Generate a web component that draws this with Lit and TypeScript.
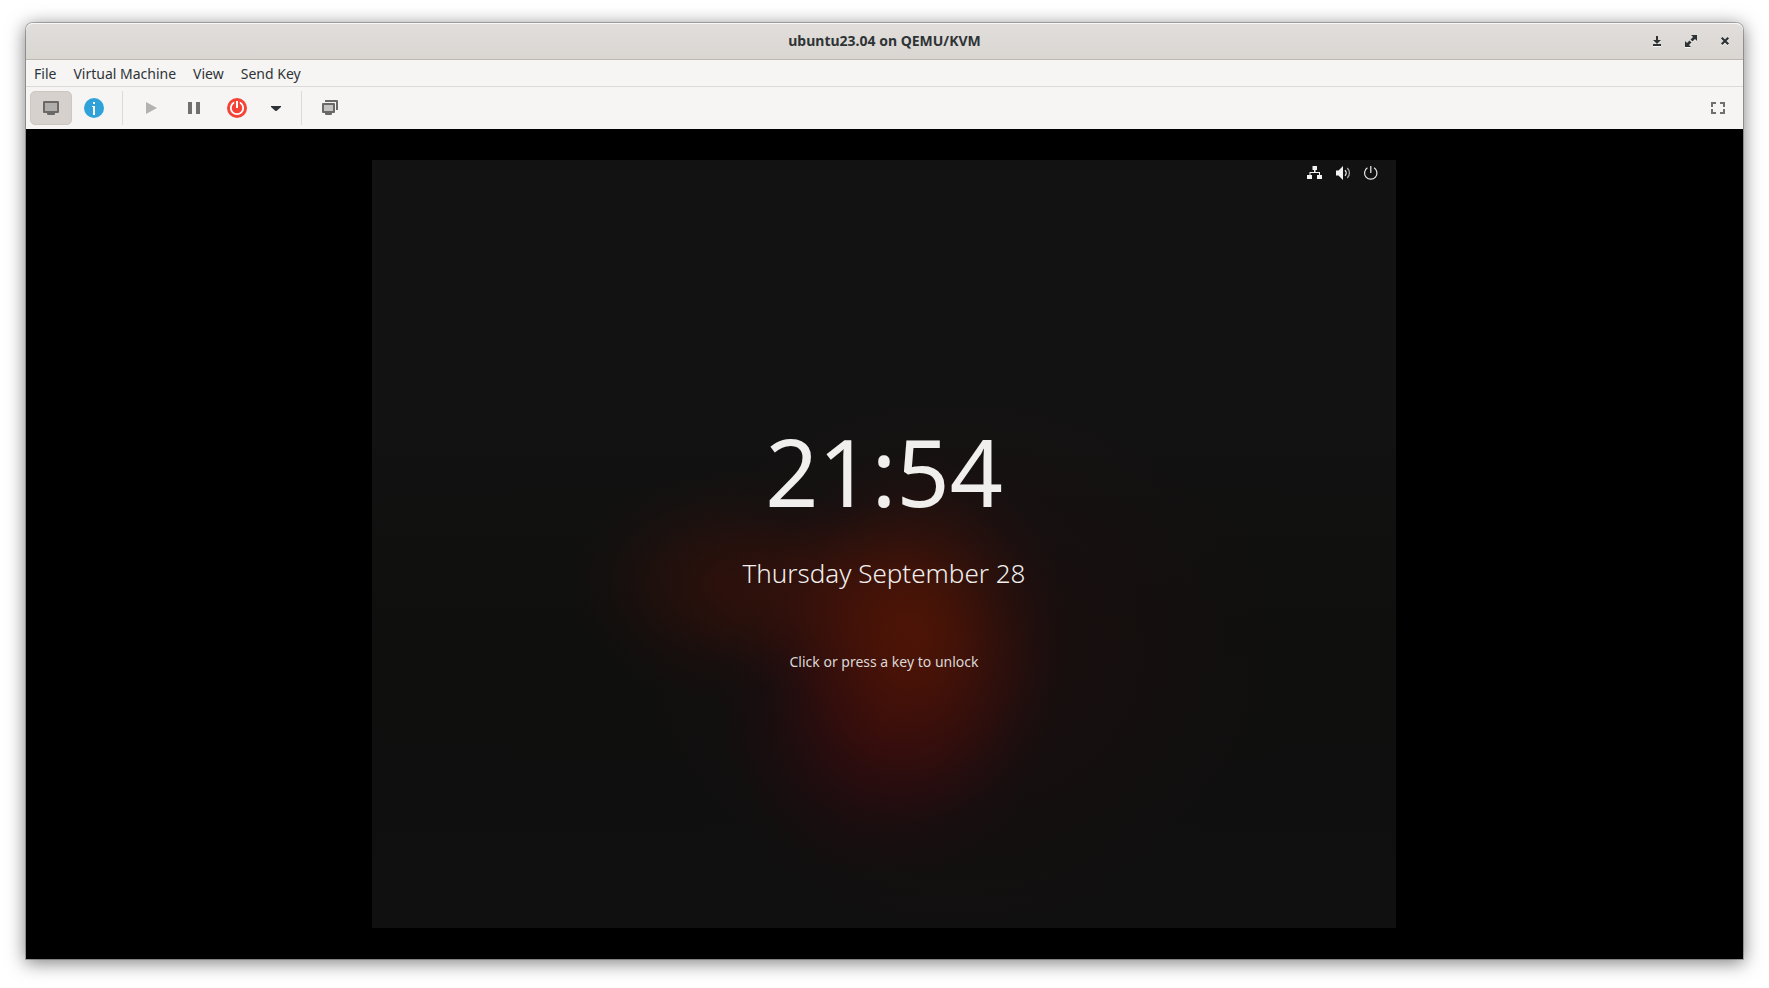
import { LitElement, html, css } from "lit";
import { customElement } from "lit/decorators.js";

const monitorIcon = html`<svg width="16" height="16" viewBox="0 0 16 16" aria-hidden="true">
  <rect x="1" y="2" width="14" height="10" fill="#b0aeab" stroke="#6b6967" stroke-width="2" stroke-linejoin="round" />
  <path d="M4 13h8v1.2l-.8.8H4.800l-.8-.8z" fill="#6b6967" />
</svg>`;

const infoIcon = html`<svg width="20" height="20" viewBox="0 0 20 20" aria-hidden="true">
  <circle cx="10" cy="10" r="10" fill="#30a2da" />
  <path d="M9 4h2v2H9zM8 8h3v9H9V9H8z" fill="#fff" />
</svg>`;

const playIcon = html`<svg width="16" height="16" viewBox="0 0 16 16" aria-hidden="true">
  <path d="M3 2l11 6-11 6z" fill="#b2b2b0" />
</svg>`;

const pauseIcon = html`<svg width="16" height="16" viewBox="0 0 16 16" aria-hidden="true">
  <path d="M2 2h4v12H2zM10 2h4v12h-4z" fill="#71706f" />
</svg>`;

const shutdownIcon = html`<svg width="20" height="20" viewBox="0 0 20 20" aria-hidden="true">
  <circle cx="10" cy="10" r="10" fill="#f44336" />
  <circle cx="10" cy="10" r="6.200" fill="none" stroke="#fff" stroke-width="1.800" />
  <path d="M7.200 2.500h5.600v7.500H7.200z" fill="#f44336" />
  <path d="M9 3h2v7H9z" fill="#fff" />
</svg>`;

const caretIcon = html`<svg width="16" height="16" viewBox="0 0 16 16" aria-hidden="true">
  <path d="M2 6h10v1l-4.500 4h-1L2 7z" fill="#2e3436" />
</svg>`;

const snapshotsIcon = html`<svg width="16" height="16" viewBox="0 0 16 16" aria-hidden="true">
  <path d="M3 1h12v9" fill="none" stroke="#6b6967" stroke-width="2" stroke-linejoin="round" />
  <rect x="1" y="4" width="11" height="8" fill="#c4c3c2" stroke="#6b6967" stroke-width="2" stroke-linejoin="round" />
  <path d="M3 13h7v1.200l-.8.8H3.800l-.8-.8z" fill="#6b6967" />
</svg>`;

const fullscreenIcon = html`<svg width="16" height="16" viewBox="0 0 16 16" aria-hidden="true">
  <path d="M2 7V3h4M10 3h4v4M14 9v4h-4M6 13H2V9" fill="none" stroke="#71706f" stroke-width="2" />
</svg>`;

const minimizeIcon = html`<svg class="etched" width="16" height="16" viewBox="0 0 16 16" aria-hidden="true">
  <path d="M7 3h2v4h3l-4 4-4-4h3zM4 11h8v2H4z" fill="#2e3436" />
</svg>`;

const maximizeIcon = html`<svg class="etched" width="16" height="16" viewBox="0 0 16 16" aria-hidden="true">
  <path d="M8 2h6v6l-2-2-2.500 2.500-2-2L10 4zM2 14V8l2 2 2.500-2.500 2 2L6 12l2 2z" fill="#2e3436" />
</svg>`;

const closeIcon = html`<svg class="etched" width="16" height="16" viewBox="0 0 16 16" aria-hidden="true">
  <path d="M4.700 4.700l6.600 6.600M11.300 4.700l-6.600 6.600" stroke="#2e3436" stroke-width="2.200" />
</svg>`;

const networkIcon = html`<svg width="16" height="16" viewBox="0 0 16 16" aria-hidden="true">
  <path d="M5.500 1h4.500v4H8.500v2H13v3h2v4h-5v-4h2V8H3.500v2H5v4H0v-4h2.500V7h4.500V5H5.500z" fill="#f2f2f2" />
</svg>`;

const volumeIcon = html`<svg width="16" height="16" viewBox="0 0 16 16" aria-hidden="true">
  <path d="M1 5.500h2.500L8 1v14l-4.500-4.500H1z" fill="#f2f2f2" />
  <path d="M10 5.200a4 4 0 0 1 0 5.600" fill="none" stroke="#f2f2f2" stroke-width="1.300" />
  <path d="M12.300 3a7 7 0 0 1 0 10" fill="none" stroke="#a8a8a8" stroke-width="1.300" />
</svg>`;

const powerIcon = html`<svg width="16" height="16" viewBox="0 0 16 16" aria-hidden="true">
  <path d="M4.400 2.800a6.200 6.200 0 1 0 6.700 0" fill="none" stroke="#e8e8e8" stroke-width="1.200" />
  <path d="M7.200 1h1.200v7H7.200z" fill="#f2f2f2" />
</svg>`;

@customElement("lock-screen")
class LockScreen extends LitElement {
  static styles = css`
    :host {
      display: flex;
      flex-direction: column;
      box-sizing: border-box;
      width: 100%;
      max-width: 1024px;
      aspect-ratio: 4 / 3;
      color: #f0efed;
      font-family: "Noto Sans", sans-serif;
      background:
        radial-gradient(ellipse 15% 24% at 53% 62%, rgba(92, 23, 2, 0.68) 0%, rgba(90, 22, 3, 0.58) 25%, rgba(84, 20, 5, 0.32) 55%, rgba(78, 17, 8, 0.1) 80%, transparent 100%),
        radial-gradient(ellipse 15% 15% at 34% 55%, rgba(84, 18, 6, 0.34) 0%, rgba(82, 18, 6, 0.25) 35%, rgba(78, 17, 8, 0.08) 72%, transparent 100%),
        radial-gradient(ellipse 16% 13% at 46% 57%, rgba(84, 20, 6, 0.38) 0%, rgba(82, 20, 6, 0.26) 40%, rgba(78, 17, 8, 0.08) 75%, transparent 100%),
        radial-gradient(ellipse 16% 21% at 50% 73%, rgba(78, 8, 12, 0.44) 0%, rgba(74, 7, 15, 0.3) 40%, rgba(66, 7, 18, 0.1) 75%, transparent 100%),
        radial-gradient(ellipse 32% 36% at 57% 64%, rgba(60, 12, 14, 0.3) 0%, rgba(60, 12, 14, 0.11) 60%, transparent 100%),
        linear-gradient(#121212 0%, #121212 36%, #0f0f0e 60%, #0f0f0f 85%, #111010 100%);
    }
    .status {
      display: flex;
      align-items: center;
      justify-content: flex-end;
      gap: 12px;
      height: 26px;
      padding: 0 17px;
    }
    .icon {
      display: flex;
      padding: 0;
      border: 0;
      background: none;
    }
    .greeting {
      display: flex;
      flex: 1;
      flex-direction: column;
      align-items: center;
      justify-content: center;
      padding-bottom: 20px;
    }
    .clock {
      font-size: 93px;
      line-height: 96px;
    }
    .date {
      margin-top: 36px;
      font-size: 26px;
      line-height: 36px;
      font-weight: 350;
    }
    .hint {
      margin: 61px 0 0;
      font-size: 14px;
      line-height: 20px;
      color: #dcd8d6;
    }
  `;

  render() {
    return html`
      <div class="status">
        <button class="icon" aria-label="Network">${networkIcon}</button>
        <button class="icon" aria-label="Volume">${volumeIcon}</button>
        <button class="icon" aria-label="Power">${powerIcon}</button>
      </div>
      <div class="greeting">
        <time class="clock">21:54</time>
        <time class="date">Thursday September 28</time>
        <p class="hint">Click or press a key to unlock</p>
      </div>
    `;
  }
}

@customElement("app-root")
class AppRoot extends LitElement {
  static styles = css`
    :host {
      display: flex;
      box-sizing: border-box;
      min-height: 100vh;
      padding: 23px 26px 29px;
      background: #fff;
      color: #2e3436;
      font-family: "Noto Sans", sans-serif;
      font-size: 14px;
    }
    button {
      display: flex;
      align-items: center;
      justify-content: center;
      margin: 0;
      padding: 0;
      border: 0;
      background: none;
      color: inherit;
      font: inherit;
    }
    .window {
      display: flex;
      flex: 1;
      flex-direction: column;
      min-width: 0;
      border-radius: 7px 7px 0 0;
      background: #f6f5f4;
      box-shadow:
        0 0 0 1px rgba(0, 0, 0, 0.25),
        0 3px 18px 1px rgba(0, 0, 0, 0.5);
    }
    .titlebar {
      display: grid;
      grid-template-columns: 1fr auto 1fr;
      align-items: center;
      box-sizing: border-box;
      height: 37px;
      padding: 0 6px;
      border-bottom: 1px solid #bfb8b1;
      border-radius: 7px 7px 0 0;
      background: linear-gradient(#e1dedb, #dad6d2);
      box-shadow: inset 0 1px #f9f8f8;
    }
    .title {
      grid-column: 2;
      margin: 0;
      font-size: 14px;
      line-height: 20px;
      font-weight: 700;
    }
    .controls {
      display: flex;
      justify-content: flex-end;
      gap: 10px;
    }
    .control {
      width: 24px;
      height: 24px;
    }
    .etched {
      filter: drop-shadow(0 1px rgba(255, 255, 255, 0.75));
    }
    .menubar {
      display: flex;
      gap: 1px;
      height: 26px;
      border-bottom: 1px solid #dcdad8;
    }
    .menu {
      padding: 2px 8px 0;
      line-height: 20px;
    }
    .toolbar {
      display: flex;
      gap: 1px;
      padding: 4px;
    }
    .tool {
      box-sizing: border-box;
      width: 42px;
      height: 34px;
      border-radius: 5px;
    }
    .tool.active {
      border: 1px solid #cdc7c2;
      background: #d6d1cd;
    }
    .tool.narrow {
      width: 35px;
    }
    .tool.last {
      margin-left: auto;
    }
    .separator {
      width: 1px;
      margin: 0 6px;
      background: #dcdad8;
    }
    .console {
      display: flex;
      flex: 1;
      align-items: center;
      justify-content: center;
      padding-right: 1px;
      background: #000;
    }
  `;

  render() {
    return html`
      <main class="window">
        <header class="titlebar">
          <h1 class="title">ubuntu23.04 on QEMU/KVM</h1>
          <div class="controls">
            <button class="control" aria-label="Minimize">${minimizeIcon}</button>
            <button class="control" aria-label="Maximize">${maximizeIcon}</button>
            <button class="control" aria-label="Close">${closeIcon}</button>
          </div>
        </header>
        <nav class="menubar">
          ${["File", "Virtual Machine", "View", "Send Key"].map(
            (label) => html`<button class="menu">${label}</button>`
          )}
        </nav>
        <div class="toolbar" role="toolbar">
          <button class="tool active" aria-label="Console" aria-pressed="true">${monitorIcon}</button>
          <button class="tool" aria-label="Details">${infoIcon}</button>
          <span class="separator"></span>
          <button class="tool" aria-label="Run" disabled>${playIcon}</button>
          <button class="tool" aria-label="Pause">${pauseIcon}</button>
          <button class="tool" aria-label="Shut down">${shutdownIcon}</button>
          <button class="tool narrow" aria-label="Shut down options">${caretIcon}</button>
          <span class="separator"></span>
          <button class="tool" aria-label="Snapshots">${snapshotsIcon}</button>
          <button class="tool last" aria-label="Fullscreen">${fullscreenIcon}</button>
        </div>
        <section class="console">
          <lock-screen></lock-screen>
        </section>
      </main>
    `;
  }
}
